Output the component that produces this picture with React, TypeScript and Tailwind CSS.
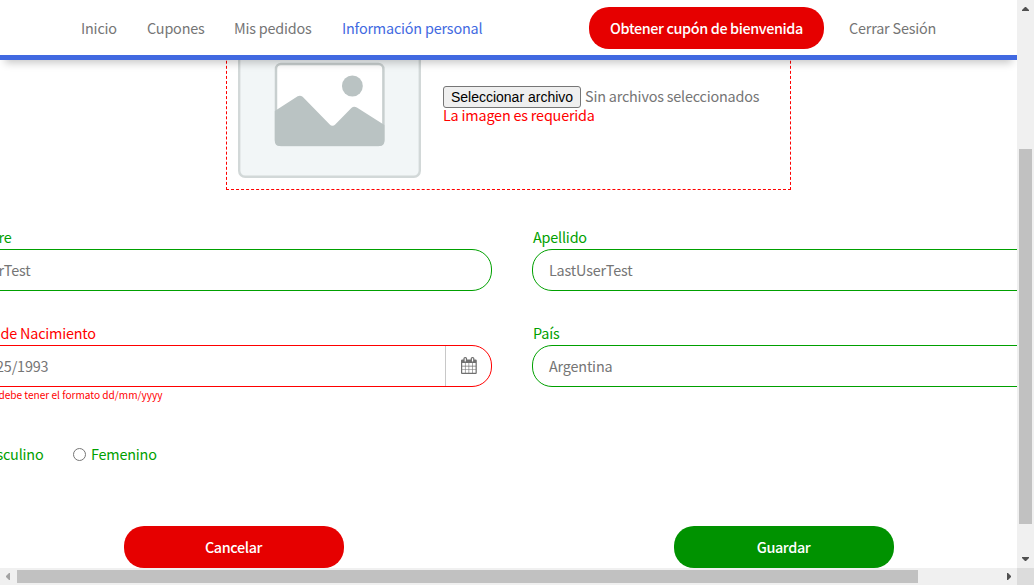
import type { ReactNode } from "react";

const navItems = [
  { label: "Inicio", box: "w-[66px]", color: "text-[#757575]" },
  { label: "Cupones", box: "w-[87px]", color: "text-[#757575]" },
  { label: "Mis pedidos", box: "w-[108px]", color: "text-[#757575]" },
  { label: "Información personal", box: "w-[247px]", color: "text-[#4169e1]" },
];

function Placeholder() {
  return (
    <svg width="183" height="184" viewBox="0 0 184 184" preserveAspectRatio="none" className="block shrink-0">
      <rect x="1.2" y="1.2" width="181.600" height="181.600" rx="6" fill="#f2f6f7" stroke="#d2d8d8" strokeWidth="2.400" />
      <rect x="38.200" y="70" width="108" height="81" rx="5" fill="#fff" stroke="#c8cfcf" strokeWidth="2.500" />
      <circle cx="115" cy="92" r="10.500" fill="#bac3c3" />
      <path d="M37 117 60 102.300q2.500-1.500 5 .5l27 27.500q3 3 6 0l16-16.200q2.500-2.500 5.500-.5l27.700 17.500V147q0 5-5 5H42q-5 0-5-5Z" fill="#bac3c3" />
    </svg>
  );
}

function Calendar() {
  return (
    <svg width="17" height="17" viewBox="64 0 1792 1792" className="mb-px ml-0.5 block" fill="#707070">
      <path d="M192 1664h288v-288h-288v288zm352 0h320v-288h-320v288zm-352-352h288v-320h-288v320zm352 0h320v-320h-320v320zm-352-384h288v-288h-288v288zm736 736h320v-288h-320v288zm-384-736h320v-288h-320v288zm768 736h288v-288h-288v288zm-384-352h320v-320h-320v320zm-352-864v-288q0-13-9.500-22.500t-22.500-9.500h-64q-13 0-22.500 9.500t-9.500 22.500v288q0 13 9.500 22.500t22.500 9.500h64q13 0 22.500-9.500t9.500-22.500zm736 864h288v-320h-288v320zm-384-384h320v-288h-320v288zm384 0h288v-288h-288v288zm32-480v-288q0-13-9.500-22.500t-22.500-9.500h-64q-13 0-22.500 9.500t-9.500 22.500v288q0 13 9.500 22.500t22.500 9.500h64q13 0 22.500-9.500t9.500-22.500zm384-64v1280q0 52-38 90t-90 38h-1408q-52 0-90-38t-38-90v-1280q0-52 38-90t90-38h128v-96q0-66 47-113t113-47h64q66 0 113 47t47 113v96h384v-96q0-66 47-113t113-47h64q66 0 113 47t47 113v96h128q52 0 90 38t38 90z" />
    </svg>
  );
}

function Field({ label, value, invalid = false, error, children }: { label: string; value: string; invalid?: boolean; error?: string; children?: ReactNode }) {
  return (
    <div className="h-24 w-[535px] whitespace-nowrap">
      <div className={invalid ? "h-[23px] pl-[1.5px] leading-[21px] text-[#ff0000]" : "h-[23px] pl-px leading-[21px] text-[#00a000]"}>{label}</div>
      <div className={invalid ? "flex h-[42px] items-center justify-between rounded-[20px] border border-[#ff0000] pl-[17px]" : "flex h-[42px] items-center justify-between rounded-[20px] border border-[#00a000] pl-4"}>
        <span className="text-[#757575]">{value}</span>
        {children}
      </div>
      {error && <div className="h-4 text-[10.100px] leading-4 tracking-normal text-[#ff0000]">{error}</div>}
    </div>
  );
}

export default function App() {
  return (
    <div className="flex h-[585px] w-[1034px] flex-col overflow-hidden bg-white font-['Noto_Sans_CJK_SC',sans-serif] text-[14.400px] leading-6 tracking-[-0.19px]">
      <div className="flex h-[568px]">
        <main className="flex w-[1017px] flex-col overflow-hidden">
          <header className="relative z-10 flex h-[60px] shrink-0 items-center whitespace-nowrap border-b-[5px] border-[#4169e1] bg-white pl-[81px] shadow-[0_8px_8px_-5px_rgba(0,0,0,0.22)]">
            {navItems.map((item) => (
              <a key={item.label} className={`${item.box} ${item.color} shrink-0`}>{item.label}</a>
            ))}
            <button className="h-[42px] w-[235px] shrink-0 rounded-[20px] bg-[#e60000] font-medium tracking-[-0.38px] text-white">Obtener cupón de bienvenida</button>
            <a className="ml-[25px] text-[#757575]">Cerrar Sesión</a>
          </header>

          <div className="flex h-[508px] flex-col overflow-hidden">
            <section className="-mt-20 ml-[226px] flex h-[210px] w-[565px] shrink-0 border border-dashed border-[#ff0000] pl-[11px] pt-[13px]">
              <Placeholder />
              <div className="ml-[22px] mt-[92px] whitespace-nowrap">
                <div className="flex h-[22px] items-center">
                  <button className="h-[22px] w-[138px] rounded-[3px] border border-[#767676] bg-[#efefef] font-['Liberation_Sans',Arial,sans-serif] text-sm leading-5 tracking-normal text-black">Seleccionar archivo</button>
                  <span className="ml-1 pb-0.5 text-[#757575]">Sin archivos seleccionados</span>
                </div>
                <p className="leading-[14px] text-[#ff0000]">La imagen es requerida</p>
              </div>
            </section>

            <div className="-ml-[43px] mt-9 grid w-[1110px] shrink-0 grid-cols-2 gap-x-10">
              <Field label="Nombre" value="UserTest" />
              <Field label="Apellido" value="LastUserTest" />
              <Field label="Fecha de Nacimiento" value="02/25/1993" invalid error="La fecha debe tener el formato dd/mm/yyyy">
                <div className="flex h-full w-[46px] items-center justify-center border-l border-[#c8c8c8]">
                  <Calendar />
                </div>
              </Field>
              <Field label="País" value="Argentina" />
            </div>

            <div className="-ml-[43px] mt-6 flex h-6 shrink-0 items-center whitespace-nowrap text-[#00a000]">
              <label className="flex w-[116px] items-center gap-[7px]">
                <span className="h-[13px] w-[13px] rounded-full border border-[#767676] bg-white" />
                Masculino
              </label>
              <label className="flex items-center gap-[5px]">
                <span className="h-[13px] w-[13px] rounded-full border border-[#767676] bg-white" />
                Femenino
              </label>
            </div>

            <div className="ml-[124px] mt-[60px] flex shrink-0 gap-[330px] tracking-[-0.38px]">
              <button className="h-[42px] w-[220px] rounded-[20px] bg-[#e60000] pr-px font-medium text-white">Cancelar</button>
              <button className="h-[42px] w-[220px] rounded-[20px] bg-[#009200] pr-px font-medium text-white">Guardar</button>
            </div>
          </div>
        </main>

        <div className="flex w-[17px] flex-col items-center bg-[#f0f0f0] pt-[7px]">
          <svg width="7" height="4" className="shrink-0"><path d="M3 0h1l3 3v1H0V3z" fill="#505050" /></svg>
          <div className="mt-[138px] h-[375px] w-[13px] shrink-0 bg-[#c1c1c1]" />
          <svg width="7" height="4" className="mt-[33px] shrink-0"><path d="M0 0h7v1L4 4H3L0 1z" fill="#505050" /></svg>
        </div>
      </div>

      <div className="flex h-[17px] items-center bg-[#f0f0f0]">
        <svg width="4" height="7" className="ml-1.5 shrink-0"><path d="M4 0v7H3L0 4V3l3-3z" fill="#a3a3a3" /></svg>
        <div className="ml-[7px] h-[13px] w-[901px] bg-[#c1c1c1]" />
        <svg width="4" height="7" className="ml-[89px] shrink-0"><path d="M0 0h1l3 3v1L1 7H0z" fill="#505050" /></svg>
        <div className="ml-auto h-[17px] w-[17px] bg-[#dcdcdc]" />
      </div>
    </div>
  );
}
